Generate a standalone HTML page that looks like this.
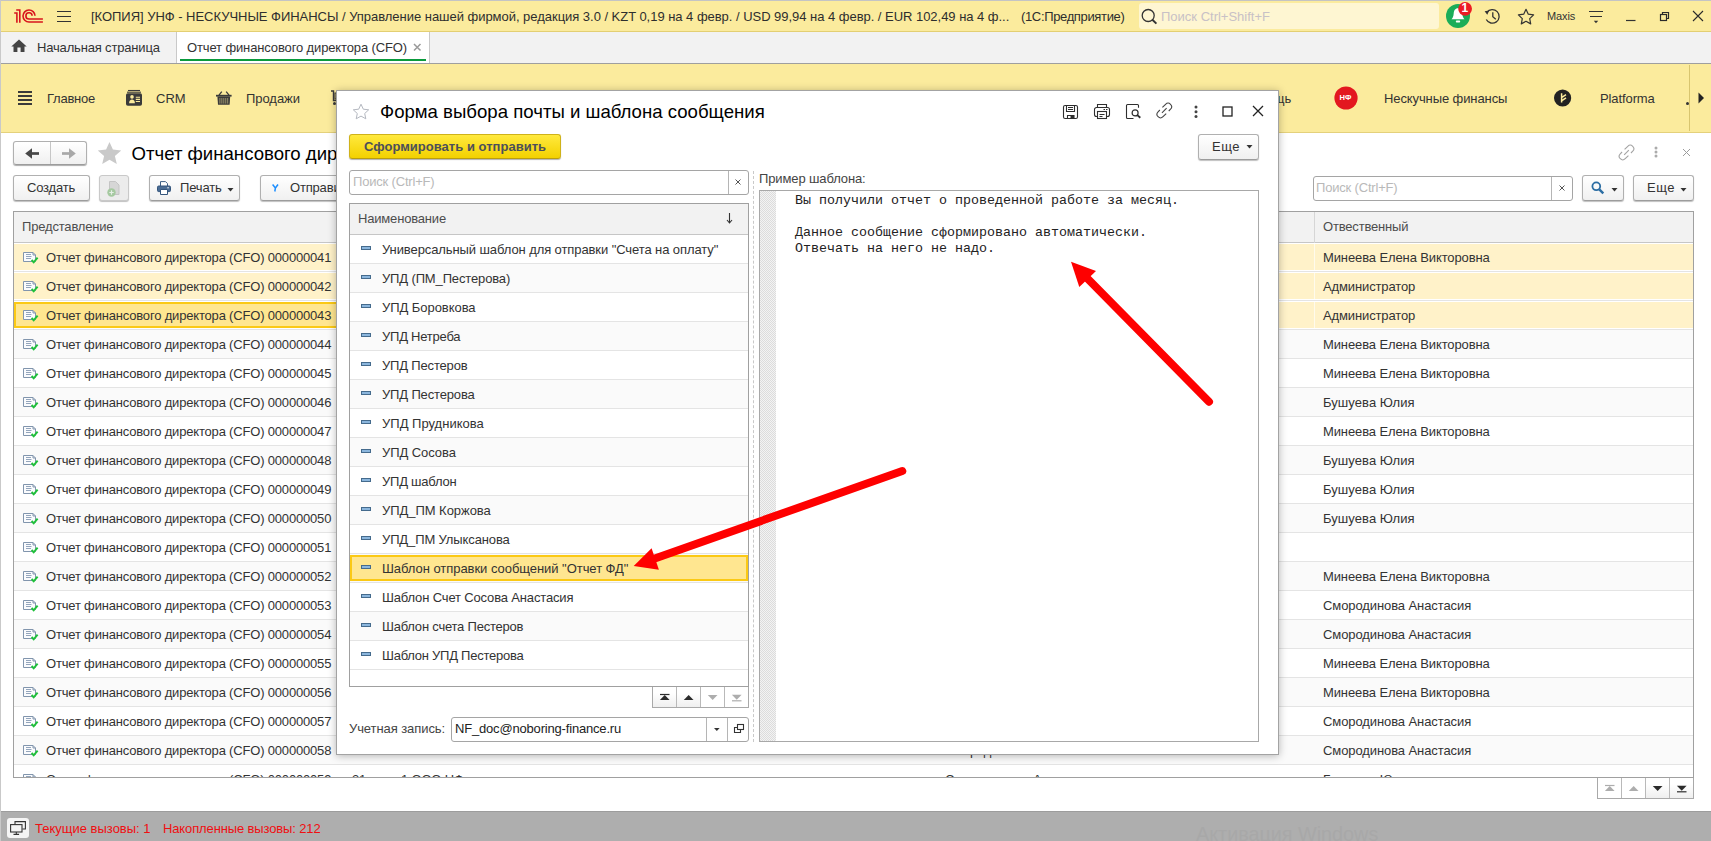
<!DOCTYPE html>
<html lang="ru">
<head>
<meta charset="utf-8">
<title>Отчет финансового директора (CFO)</title>
<style>
*{box-sizing:border-box;margin:0;padding:0}
html,body{width:1711px;height:841px;overflow:hidden;background:#fff}
body{position:relative;font-family:"Liberation Sans",sans-serif;font-size:13px;color:#333;letter-spacing:-0.18px}
.abs{position:absolute}
svg{position:absolute;overflow:visible}
.t{position:absolute;white-space:nowrap;line-height:16px}
#titlebar{left:0;top:0;width:1711px;height:32px;background:#fbeb9d;border-top:1px solid #c4c4c4;border-bottom:1px solid #e3cf73}
#tabbar{left:0;top:32px;width:1711px;height:32px;background:#f2f2f2;border-bottom:1px solid #9f9f9f}
#sections{left:0;top:64px;width:1711px;height:69px;background:#fbeb9d;border-bottom:1px solid #e4d17c}
#status{left:0;top:811px;width:1711px;height:30px;background:#aeaeae;border-top:1px solid #9c9c9c}
#leftedge{left:0;top:0;width:1px;height:841px;background:#c9c9c9}
.btn{position:absolute;height:26px;border:1px solid #b0b0b0;border-radius:3px;background:linear-gradient(#ffffff,#f0f0f0);box-shadow:0 1px 1px rgba(0,0,0,.25);border-bottom-color:#9c9c9c;color:#333;white-space:nowrap}
.btn .t{top:4px}
.inp{position:absolute;height:25px;border:1px solid #a5a5a5;border-radius:3px;background:#fff;white-space:nowrap}
.ph{color:#b9b9b9}
.grid{position:absolute;border:1px solid #a0a0a0;background:#fff;overflow:hidden}
.hdr{position:absolute;left:0;top:0;right:0;height:31px;background:#f2f2f2;border-bottom:1px solid #c6c6c6;color:#4d4d4d}
.hdr .t{top:7px}
.row{position:absolute;left:0;right:0;height:29px;border-bottom:1px solid #e4e4e4;background:#fff}
.row.alt{background:#fafafa}
.row.hl{background:#fff2c9;box-shadow:inset 0 1px 0 #fff,inset 0 -1px 0 #fff}
.row.sel::before{content:"";position:absolute;left:0;right:0;top:1px;height:26px;background:#ffe690;box-shadow:inset 0 0 0 2px #fbc915}
.row .t{top:7px}
.row .di{left:9px;top:8px}
.bar{position:absolute;left:11px;top:11px;width:10px;height:4px;background:#8bb6dd;border:1px solid #456b8d}
#dialog{left:336px;top:90px;width:943px;height:665px;background:#fff;border:1px solid #a3a3a3;box-shadow:0 1px 8px rgba(0,0,0,.28)}
.navb{position:absolute;height:22px;border:1px solid #a9a9a9;border-top:none;background:#fff}
.navb i{position:absolute;top:0;bottom:0;width:1px;background:#b9b9b9}
.selc{position:absolute;left:0;top:1px;width:330px;height:26px;background:#ffe690;box-shadow:inset 0 0 0 2px #fbc915}
.dl .row .t{letter-spacing:-0.08px}
.csep{position:absolute;left:1300px;top:1px;width:1px;height:26px;background:rgba(255,255,255,.65)}

</style>
</head>
<body>
<svg width="0" height="0" style="display:none">
<defs>
<g id="docicon">
<path d="M0.500 1.500h9.500l2.500 2.500v6.500h-12z" fill="#fafbfd" stroke="#8195ad" stroke-width="1"/>
<path d="M10 1.500v2.500h2.500" fill="none" stroke="#8195ad" stroke-width="1"/>
<path d="M3 3.500h5M3 5.500h5.500M3 7.500h5" stroke="#93a5bc" stroke-width="1" fill="none"/>
<path d="M8.600 9l2.100 2.300 3.900-4.600" fill="none" stroke="#1fc03a" stroke-width="2"/>
</g>
</defs>
</svg>
<div id="titlebar" class="abs"></div>
<!-- 1C logo -->
<svg style="left:0px;top:0px" width="50" height="32" viewBox="0 0 50 32" fill="none" stroke="#d8141c" stroke-width="1.600">
<path d="M14.200 13H16.900V22.800"/>
<path d="M16.200 10H19.800V22.800"/>
<path d="M35 15.800A6 6 0 1 0 29 22H42.900"/>
<path d="M32.100 15.800A3.100 3.100 0 1 0 29 19H42.900"/>
</svg>
<svg style="left:57px;top:10px" width="15" height="13" viewBox="0 0 15 13"><path d="M0 1.5h14M0 6.5h14M0 11.5h14" stroke="#333" stroke-width="1.1"/></svg>
<span class="t" style="left:91px;top:9px;letter-spacing:-0.03px;color:#2e2e2e">[КОПИЯ] УНФ - НЕСКУЧНЫЕ ФИНАНСЫ / Управление нашей фирмой, редакция 3.0 / KZT 0,19 на 4 февр. / USD 99,94 на 4 февр. / EUR 102,49 на 4 ф...</span>
<span class="t" style="left:1021px;top:9px;letter-spacing:-0.350px;color:#2e2e2e">(1С:Предприятие)</span>
<div class="abs" style="left:1139px;top:3px;width:300px;height:26px;background:#fef6d2;border-radius:3px"></div>
<svg style="left:1141px;top:8px" width="17" height="17" viewBox="0 0 17 17"><circle cx="7.2" cy="7.5" r="6" fill="none" stroke="#333" stroke-width="1.3"/><path d="M11.4 11.8L15.4 15.6" stroke="#333" stroke-width="2"/></svg>
<span class="t" style="left:1161px;top:9px;letter-spacing:0;color:#c8c1c6">Поиск Ctrl+Shift+F</span>
<!-- bell -->
<svg style="left:1446px;top:1px" width="28" height="28" viewBox="0 0 28 28">
<circle cx="12" cy="15" r="12" fill="#1bad59"/>
<path d="M12 7.2c-2.9 0-4.1 2.4-4.3 5.2-.2 3-1 4.600-2.200 5.800h13c-1.200-1.200-2-2.800-2.200-5.800-.2-2.800-1.400-5.200-4.300-5.200z" fill="#fff"/>
<rect x="9.8" y="19.600" width="4.400" height="1.900" rx=".9" fill="#fff"/>
<circle cx="19.100" cy="7.800" r="6.900" fill="#ec1c24"/>
</svg>
<span class="t" style="left:1461.600px;top:1px;font-weight:bold;font-size:12px;color:#fff;letter-spacing:0;line-height:15px">1</span>
<!-- history -->
<svg style="left:1484px;top:8px" width="17" height="17" viewBox="0 0 17 17">
<path d="M2.900 4.300A6.800 6.800 0 1 1 2.300 11.500" fill="none" stroke="#333" stroke-width="1.300"/>
<path d="M0.600 3.200L3.300 6.800 5.200 2.600z" fill="#333"/>
<path d="M8.800 4.300V8.800L11.800 11.200" fill="none" stroke="#333" stroke-width="1.300"/>
</svg>
<!-- star -->
<svg style="left:1517px;top:8px" width="18" height="17" viewBox="0 0 18 17"><path d="M9 1.300l2.300 4.900 5.300.7-3.900 3.700 1 5.300L9 13.300l-4.700 2.600 1-5.300L1.400 6.900l5.300-.7z" fill="none" stroke="#333" stroke-width="1.200" stroke-linejoin="round"/></svg>
<span class="t" style="left:1547px;top:8px;font-size:11px;letter-spacing:-0.1px;color:#333">Maxis</span>
<svg style="left:1589px;top:10px" width="15" height="14" viewBox="0 0 15 14"><path d="M0 1.500h14M1 6.500h12" stroke="#333" stroke-width="1.100"/><path d="M4.800 10.800h4.400l-2.200 2.400z" fill="#333"/></svg>
<svg style="left:1626px;top:19px" width="10" height="3" viewBox="0 0 10 3"><path d="M0 1.500h9.500" stroke="#333" stroke-width="1.200"/></svg>
<svg style="left:1659px;top:11px" width="11" height="11" viewBox="0 0 11 11"><path d="M3.500 3V1.500H9.500V7.500H8" fill="none" stroke="#2a2a2a" stroke-width="1.200"/><rect x="1.500" y="3.500" width="6" height="6" fill="none" stroke="#2a2a2a" stroke-width="1.200"/></svg>
<svg style="left:1692px;top:10px" width="12" height="12" viewBox="0 0 12 12"><path d="M1 1l10 10M11 1L1 11" stroke="#2a2a2a" stroke-width="1.100"/></svg>

<div id="tabbar" class="abs"></div>
<svg style="left:11px;top:39px" width="16" height="14" viewBox="0 0 16 14"><path d="M8 0.600L0.300 7.600h2.200V13h3.900V8.600h3.200V13h3.900V7.600h2.200z" fill="#444"/></svg>
<span class="t" style="left:37px;top:40px;letter-spacing:-0.17px">Начальная страница</span>
<div class="abs" style="left:176px;top:32px;width:254px;height:31px;background:#fff;border-left:1px solid #c9c9c9;border-right:1px solid #c9c9c9"></div>
<div class="abs" style="left:180px;top:59px;width:246px;height:2px;background:#0a9a3c"></div>
<span class="t" style="left:187px;top:40px;letter-spacing:-0.13px">Отчет финансового директора (CFO)</span>
<svg style="left:413px;top:43px" width="9" height="9" viewBox="0 0 9 9"><path d="M1 1l6.500 6.500M7.500 1L1 7.500" stroke="#9a9a9a" stroke-width="1.500"/></svg>

<div id="sections" class="abs"></div>
<svg style="left:18px;top:91px" width="15" height="15" viewBox="0 0 15 15"><path d="M0 1h14M0 5h14M0 9h14M0 13h14" stroke="#3a3a3a" stroke-width="2"/></svg>
<span class="t" style="left:47px;top:91px;letter-spacing:-0.250px">Главное</span>
<!-- CRM icon -->
<svg style="left:126px;top:90px" width="17" height="17" viewBox="0 0 17 17">
<path d="M2 0.500h12" stroke="#3a3a3a" stroke-width="1.100"/>
<path d="M1 2.200h14" stroke="#3a3a3a" stroke-width="1.100"/>
<rect x="0" y="3.300" width="16" height="12.500" rx="1.800" fill="#3a3a3a"/>
<circle cx="6" cy="6.900" r="1.800" fill="#fbeb9d"/>
<path d="M3.100 13.200c0-2.400 1.300-3.600 2.900-3.600s2.900 1.200 2.900 3.600z" fill="#fbeb9d"/>
<path d="M9.800 7.300h4.200M9.800 9.400h4.200M9.800 11.500h4.200" stroke="#fbeb9d" stroke-width="1.100"/>
</svg>
<span class="t" style="left:156px;top:91px;letter-spacing:0">CRM</span>
<!-- basket -->
<svg style="left:216px;top:91px" width="16" height="14" viewBox="0 0 16 14">
<path d="M3 4.200L5.800 0.600M13 4.200L10.200 0.600" stroke="#3a3a3a" stroke-width="1.300" fill="none"/>
<path d="M0 3.800h15.600v1.800H0z" fill="#3a3a3a"/>
<path d="M1.400 5.600h12.800l-0.600 8.100H2z" fill="#3a3a3a"/>
<path d="M3.900 7v5.600M5.850 7v5.600M7.800 7v5.600M9.750 7v5.600M11.700 7v5.600" stroke="#fbeb9d" stroke-width=".5"/>
</svg>
<span class="t" style="left:246px;top:91px;letter-spacing:-0.05px">Продажи</span>
<svg style="left:331px;top:90px" width="12" height="16" viewBox="0 0 12 16"><path d="M0 1h2.500v9.500h8" fill="none" stroke="#3a3a3a" stroke-width="1.400"/><path d="M4 3h7v6H4z" fill="none" stroke="#3a3a3a" stroke-width="1.200"/><circle cx="3.500" cy="13.500" r="1.500" fill="#3a3a3a"/></svg>
<span class="t" style="left:1241px;top:91px;letter-spacing:0">Помощь</span>
<svg style="left:1334px;top:86px" width="24" height="24" viewBox="0 0 24 24"><circle cx="12" cy="12" r="11.600" fill="#e3181f"/></svg>
<span class="t" style="left:1339.500px;top:92px;font-size:7.500px;font-weight:bold;color:#fff;letter-spacing:0;line-height:12px">НФ</span>
<span class="t" style="left:1384px;top:91px;letter-spacing:-0.1px">Нескучные финансы</span>
<svg style="left:1554px;top:89px" width="18" height="18" viewBox="0 0 18 18"><circle cx="8.600" cy="9" r="8.600" fill="#222"/><path d="M7.600 4.200V13.400M7.900 8.400L12 5.600M7.900 11.600L12 8.800" stroke="#fbeb9d" stroke-width="1.500" fill="none"/></svg>
<span class="t" style="left:1600px;top:91px;letter-spacing:-0.1px">Platforma</span>
<div class="abs" style="left:1686px;top:102px;width:3px;height:3px;border-radius:2px;background:#333"></div>
<div class="abs" style="left:1689px;top:65px;width:1px;height:66px;background:#d8c56f"></div>
<svg style="left:1698px;top:92px" width="7" height="12" viewBox="0 0 7 12"><path d="M0.500 0.500L6 6 0.500 11.500z" fill="#222"/></svg>

<!-- main form -->
<div class="btn" style="left:13px;top:141px;width:74px;height:24px;box-shadow:0 1px 1px rgba(0,0,0,.33)"><div class="abs" style="left:36px;top:0;width:1px;height:22px;background:#c6c6c6"></div>
<svg style="left:11px;top:6px" width="15" height="11" viewBox="0 0 15 11"><path d="M14 5.500H4" stroke="#474747" stroke-width="2.700"/><path d="M0.200 5.500L7 0.200V10.800z" fill="#474747"/></svg>
<svg style="left:47px;top:6px" width="15" height="11" viewBox="0 0 15 11"><path d="M1 5.500H11" stroke="#a8a8a8" stroke-width="2.700"/><path d="M14.800 5.500L8 0.200V10.800z" fill="#a8a8a8"/></svg>
</div>
<svg style="left:97px;top:141px" width="25" height="24" viewBox="0 0 25 24"><path d="M12.500 1l3.400 7.600 8.300.8-6.300 5.500 1.900 8.100-7.300-4.300-7.300 4.300 1.900-8.100L.8 9.400l8.300-.8z" fill="#c9c9c9"/></svg>
<span class="t" style="left:131.500px;top:142.500px;font-size:18.600px;line-height:22px;color:#000;letter-spacing:0">Отчет финансового директора (CFO)</span>
<div class="btn" style="left:13px;top:175px;width:77px"><span class="t" style="left:13px">Создать</span></div>
<div class="btn" style="left:99px;top:175px;width:30px;background:#ececec;border-color:#c9c9c9">
<svg style="left:7px;top:5px" width="14" height="16" viewBox="0 0 14 16"><path d="M2.500 0.500h6l3.500 3.500v9.500h-9.500z" fill="#d6d6d6" stroke="#c4c4c4"/><circle cx="4.500" cy="11.500" r="4.200" fill="#a5c9a0"/><path d="M4.500 9.300v4.400M2.300 11.500h4.400" stroke="#e6efe6" stroke-width="1.200"/></svg>
</div>
<div class="btn" style="left:149px;top:175px;width:91px">
<svg style="left:7px;top:5px" width="14" height="14" viewBox="0 0 14 14"><path d="M3.500 5V0.600h5l2 2V5" fill="#fff" stroke="#3d5f86" stroke-width="1"/><rect x="0.500" y="5" width="13" height="5.600" rx="1.200" fill="#4a6c94" stroke="#34557c" stroke-width="1"/><path d="M3.500 8.500h7v5h-7z" fill="#fff" stroke="#34557c" stroke-width="1"/><path d="M10.300 6.800h1.500" stroke="#fff" stroke-width="1"/></svg>
<span class="t" style="left:30px">Печать</span>
<svg style="left:77px;top:12px" width="8" height="4" viewBox="0 0 8 4"><path d="M0.500 0h6l-3 3.600z" fill="#333"/></svg>
</div>
<div class="btn" style="left:260px;top:175px;width:110px">
<svg style="left:11px;top:8px" width="7" height="8" viewBox="0 0 7 8"><path d="M0.600 0.500L3.400 4 6 0.500M3.400 4L2.800 7.500" fill="none" stroke="#1e8fff" stroke-width="1.500"/></svg>
<span class="t" style="left:29px">Отправить</span>
</div>
<!-- right header icons -->
<svg style="left:0;top:0" width="1" height="1" viewBox="0 0 1 1" fill="none" stroke="#a3a3a3" stroke-width="1.100"><g transform="translate(1626.5 152.5) rotate(-45)"><path d="M0.800 -3.500H5.300A3.500 3.500 0 0 1 5.300 3.500H2.800"/><path d="M-0.800 3.500H-5.300A3.500 3.500 0 0 1 -5.300 -3.500H-2.800"/><path d="M-3.300 0H3.300"/></g></svg>
<svg style="left:1654px;top:146px" width="4" height="14" viewBox="0 0 4 14"><circle cx="2" cy="2" r="1.500" fill="#ababab"/><circle cx="2" cy="6" r="1.500" fill="#ababab"/><circle cx="2" cy="10" r="1.500" fill="#ababab"/></svg>
<svg style="left:1683px;top:149px" width="8" height="8" viewBox="0 0 8 8"><path d="M0 0l7 7M7 0L0 7" stroke="#9c9c9c" stroke-width="1"/></svg>
<div class="inp" style="left:1313px;top:176px;width:260px"><span class="t ph" style="left:2px;top:3px">Поиск (Ctrl+F)</span><div class="abs" style="left:237px;top:0;width:1px;height:23px;background:#b5b5b5"></div>
<svg style="left:245px;top:8px" width="6" height="6" viewBox="0 0 6 6"><path d="M0.500 0.500l5 5M5.500 0.500L0.500 5.500" stroke="#555" stroke-width="1"/></svg></div>
<div class="btn" style="left:1582px;top:175px;width:42px">
<svg style="left:8px;top:5px" width="14" height="14" viewBox="0 0 14 14"><circle cx="5.300" cy="5.300" r="3.900" fill="none" stroke="#2b6da3" stroke-width="1.800"/><path d="M8.300 8.300L12.300 12.300" stroke="#2b6da3" stroke-width="2.400"/></svg>
<svg style="left:28px;top:12px" width="8" height="4" viewBox="0 0 8 4"><path d="M0.500 0h6l-3 3.600z" fill="#333"/></svg>
</div>
<div class="btn" style="left:1633px;top:175px;width:61px"><span class="t" style="left:13px;letter-spacing:0.500px">Еще</span><svg style="left:46px;top:12px" width="8" height="4" viewBox="0 0 8 4"><path d="M0.500 0h6l-3 3.600z" fill="#333"/></svg></div>

<div class="grid" style="left:13px;top:211px;width:1681px;height:567px">
<div class="hdr"><span class="t" style="left:8px">Представление</span><div class="abs" style="left:1300px;top:0;width:1px;height:31px;background:#d6d6d6"></div><span class="t" style="left:1309px">Отвественный</span></div>
<div class="row hl" style="top:31px"><div class="csep"></div><svg class="di" width="16" height="13" viewBox="0 0 16 13"><use href="#docicon"/></svg><span class="t" style="left:32px">Отчет финансового директора (CFO) 000000041</span><span class="t" style="left:1309px;letter-spacing:-0.114px">Минеева Елена Викторовна</span></div>
<div class="row alt hl" style="top:60px"><div class="csep"></div><svg class="di" width="16" height="13" viewBox="0 0 16 13"><use href="#docicon"/></svg><span class="t" style="left:32px">Отчет финансового директора (CFO) 000000042</span><span class="t" style="left:1309px;letter-spacing:-0.125px">Администратор</span></div>
<div class="row hl" style="top:89px"><div class="csep"></div><div class="selc"></div><svg class="di" width="16" height="13" viewBox="0 0 16 13"><use href="#docicon"/></svg><span class="t" style="left:32px">Отчет финансового директора (CFO) 000000043</span><span class="t" style="left:1309px;letter-spacing:-0.125px">Администратор</span></div>
<div class="row alt" style="top:118px"><svg class="di" width="16" height="13" viewBox="0 0 16 13"><use href="#docicon"/></svg><span class="t" style="left:32px">Отчет финансового директора (CFO) 000000044</span><span class="t" style="left:1309px;letter-spacing:-0.114px">Минеева Елена Викторовна</span></div>
<div class="row" style="top:147px"><svg class="di" width="16" height="13" viewBox="0 0 16 13"><use href="#docicon"/></svg><span class="t" style="left:32px">Отчет финансового директора (CFO) 000000045</span><span class="t" style="left:1309px;letter-spacing:-0.114px">Минеева Елена Викторовна</span></div>
<div class="row alt" style="top:176px"><svg class="di" width="16" height="13" viewBox="0 0 16 13"><use href="#docicon"/></svg><span class="t" style="left:32px">Отчет финансового директора (CFO) 000000046</span><span class="t" style="left:1309px;letter-spacing:0.064px">Бушуева Юлия</span></div>
<div class="row" style="top:205px"><svg class="di" width="16" height="13" viewBox="0 0 16 13"><use href="#docicon"/></svg><span class="t" style="left:32px">Отчет финансового директора (CFO) 000000047</span><span class="t" style="left:1309px;letter-spacing:-0.114px">Минеева Елена Викторовна</span></div>
<div class="row alt" style="top:234px"><svg class="di" width="16" height="13" viewBox="0 0 16 13"><use href="#docicon"/></svg><span class="t" style="left:32px">Отчет финансового директора (CFO) 000000048</span><span class="t" style="left:1309px;letter-spacing:0.064px">Бушуева Юлия</span></div>
<div class="row" style="top:263px"><svg class="di" width="16" height="13" viewBox="0 0 16 13"><use href="#docicon"/></svg><span class="t" style="left:32px">Отчет финансового директора (CFO) 000000049</span><span class="t" style="left:1309px;letter-spacing:0.064px">Бушуева Юлия</span></div>
<div class="row alt" style="top:292px"><svg class="di" width="16" height="13" viewBox="0 0 16 13"><use href="#docicon"/></svg><span class="t" style="left:32px">Отчет финансового директора (CFO) 000000050</span><span class="t" style="left:1309px;letter-spacing:0.064px">Бушуева Юлия</span></div>
<div class="row" style="top:321px"><svg class="di" width="16" height="13" viewBox="0 0 16 13"><use href="#docicon"/></svg><span class="t" style="left:32px">Отчет финансового директора (CFO) 000000051</span><span class="t" style="left:1309px"></span></div>
<div class="row alt" style="top:350px"><svg class="di" width="16" height="13" viewBox="0 0 16 13"><use href="#docicon"/></svg><span class="t" style="left:32px">Отчет финансового директора (CFO) 000000052</span><span class="t" style="left:1309px;letter-spacing:-0.114px">Минеева Елена Викторовна</span></div>
<div class="row" style="top:379px"><svg class="di" width="16" height="13" viewBox="0 0 16 13"><use href="#docicon"/></svg><span class="t" style="left:32px">Отчет финансового директора (CFO) 000000053</span><span class="t" style="left:1309px;letter-spacing:-0.091px">Смородинова Анастасия</span></div>
<div class="row alt" style="top:408px"><svg class="di" width="16" height="13" viewBox="0 0 16 13"><use href="#docicon"/></svg><span class="t" style="left:32px">Отчет финансового директора (CFO) 000000054</span><span class="t" style="left:1309px;letter-spacing:-0.091px">Смородинова Анастасия</span></div>
<div class="row" style="top:437px"><svg class="di" width="16" height="13" viewBox="0 0 16 13"><use href="#docicon"/></svg><span class="t" style="left:32px">Отчет финансового директора (CFO) 000000055</span><span class="t" style="left:1309px;letter-spacing:-0.114px">Минеева Елена Викторовна</span></div>
<div class="row alt" style="top:466px"><svg class="di" width="16" height="13" viewBox="0 0 16 13"><use href="#docicon"/></svg><span class="t" style="left:32px">Отчет финансового директора (CFO) 000000056</span><span class="t" style="left:1309px;letter-spacing:-0.114px">Минеева Елена Викторовна</span></div>
<div class="row" style="top:495px"><svg class="di" width="16" height="13" viewBox="0 0 16 13"><use href="#docicon"/></svg><span class="t" style="left:32px">Отчет финансового директора (CFO) 000000057</span><span class="t" style="left:1309px;letter-spacing:-0.091px">Смородинова Анастасия</span></div>
<div class="row alt" style="top:524px"><svg class="di" width="16" height="13" viewBox="0 0 16 13"><use href="#docicon"/></svg><span class="t" style="left:32px">Отчет финансового директора (CFO) 000000058</span><span class="t" style="left:338px">31</span><span class="t" style="left:387px">1 ООО НФ</span><span class="t" style="left:931px">Смородинова Анастасия</span><span class="t" style="left:1309px;letter-spacing:-0.091px">Смородинова Анастасия</span></div>
<div class="row" style="top:553px"><svg class="di" width="16" height="13" viewBox="0 0 16 13"><use href="#docicon"/></svg><span class="t" style="left:32px">Отчет финансового директора (CFO) 000000059</span><span class="t" style="left:338px">31</span><span class="t" style="left:387px">1 ООО НФ</span><span class="t" style="left:931px">Смородинова</span><span class="t" style="left:1019px">Анастасия</span><span class="t" style="left:1309px;letter-spacing:0.064px">Бушуева Юлия</span></div>
</div>
<div class="navb" style="left:1597px;top:778px;width:97px;height:21px"><div class="abs" style="left:48px;top:0;width:47px;height:20px;background:linear-gradient(#fff 30%,#efefef)"></div><i style="left:23px"></i><i style="left:47px"></i><i style="left:71px"></i>
<svg style="left:0;top:0" width="95" height="20" viewBox="0 0 95 20">
<path d="M7 7.500h9.500" stroke="#adadad" stroke-width="1.200"/><path d="M11.750 8L16.600 13H6.900z" fill="#adadad"/>
<path d="M35.650 8L40.500 13H30.800z" fill="#adadad"/>
<path d="M59.650 13L64.500 8H54.800z" fill="#2b2b2b"/>
<path d="M83.750 12.700L88.600 7.800H78.900z" fill="#2b2b2b"/><path d="M79 13.800h9.500" stroke="#2b2b2b" stroke-width="1.200"/>
</svg>
</div>

<div id="status" class="abs"></div>
<div class="abs" style="left:7px;top:818px;width:22px;height:20px;background:#f5f5f5;border-radius:3px"></div>
<svg style="left:10px;top:821px" width="16" height="14" viewBox="0 0 16 14" fill="none" stroke="#333" stroke-width="1.100"><path d="M5 3.500V0.600h10.400v7.400h-3"/><rect x="0.600" y="3.600" width="11.400" height="7.400" fill="#f4f4f4"/><path d="M6.300 11v2M3.500 13.400h5.600"/></svg>
<span class="t" style="left:35px;top:821px;color:#f00f12;letter-spacing:0">Текущие вызовы: 1</span>
<span class="t" style="left:163px;top:821px;color:#f00f12;letter-spacing:-0.130px">Накопленные вызовы: 212</span>
<span class="t" style="left:1196px;top:822px;font-size:19.800px;line-height:24px;color:#a8a8a8;letter-spacing:0">Активация Windows</span>

<!-- dialog -->
<div id="dialog" class="abs"></div>
<svg style="left:352px;top:103px" width="18" height="17" viewBox="0 0 18 17"><path d="M9 1.200l2.300 5 5.400.6-4 3.700 1.100 5.300L9 13.100l-4.800 2.700 1.100-5.300-4-3.700 5.400-.6z" fill="#fff" stroke="#b4b8c0" stroke-width="1" stroke-linejoin="round"/></svg>
<span class="t" style="left:380px;top:101px;font-size:18.600px;line-height:22px;color:#000;letter-spacing:0">Форма выбора почты и шаблона сообщения</span>
<!-- dialog header icons -->
<svg style="left:1062px;top:104px" width="17" height="16" viewBox="0 0 17 16" fill="none" stroke="#2e2e2e" stroke-width="1.100"><rect x="1.500" y="1.500" width="14" height="13" rx="1.600"/><path d="M4.500 1.500v6h8v-6"/><path d="M6 3.500h5M6 5.500h5" stroke-width="1"/><path d="M5.500 14.500v-3h6.500v3"/><rect x="8.500" y="11.500" width="3.500" height="3" fill="#2e2e2e" stroke="none"/></svg>
<svg style="left:1093px;top:103px" width="18" height="17" viewBox="0 0 18 17" fill="none" stroke="#2e2e2e" stroke-width="1.100"><path d="M4.500 4.500V1.500H13.500V4.500"/><path d="M4.500 13.500H3.500a2 2 0 0 1-2-2V6.500a2 2 0 0 1 2-2H14.500a2 2 0 0 1 2 2V11.500a2 2 0 0 1-2 2H13.500"/><rect x="4.500" y="8.500" width="9" height="7"/><path d="M6.500 11.500h5M6.500 13.500h3M10.500 6.500h1.500M13 6.500h1.500" stroke-width="1"/></svg>
<svg style="left:1125px;top:103px" width="18" height="17" viewBox="0 0 18 17" fill="none" stroke="#2e2e2e"><path d="M8.500 15.500H2.500a1 1 0 0 1-1-1V2.500a1 1 0 0 1 1-1H12.500a1 1 0 0 1 1 1V4.800" stroke-width="1.100"/><circle cx="10.100" cy="9.900" r="3" stroke-width="1.200"/><path d="M12.300 12.100l3 2.600" stroke-width="1.900"/></svg>
<svg style="left:0;top:0" width="1" height="1" viewBox="0 0 1 1" fill="none" stroke="#454545" stroke-width="1.100"><g transform="translate(1164.3 110.5) rotate(-45)"><path d="M0.800 -3.500H5.300A3.500 3.500 0 0 1 5.300 3.500H2.800"/><path d="M-0.800 3.500H-5.300A3.500 3.500 0 0 1 -5.300 -3.500H-2.800"/><path d="M-3.300 0H3.300"/></g></svg>
<svg style="left:1194px;top:105px" width="4" height="14" viewBox="0 0 4 14"><circle cx="2" cy="2" r="1.500" fill="#444"/><circle cx="2" cy="6.700" r="1.500" fill="#444"/><circle cx="2" cy="11.400" r="1.500" fill="#444"/></svg>
<svg style="left:1222px;top:106px" width="11" height="11" viewBox="0 0 11 11"><rect x="1" y="1" width="9" height="9" fill="none" stroke="#222" stroke-width="1.300"/></svg>
<svg style="left:1252px;top:105px" width="12" height="12" viewBox="0 0 12 12"><path d="M1 1l10 10M11 1L1 11" stroke="#222" stroke-width="1.300"/></svg>

<div class="btn" style="left:349px;top:134px;width:212px;height:25px;background:linear-gradient(#ffe93e,#f3d100);border-color:#cfb21a;border-bottom-color:#b99d10;box-shadow:0 1px 1px rgba(0,0,0,.3)"><span class="t" style="left:14px;top:4px;font-weight:bold;color:#4c4f5a;letter-spacing:0.02px">Сформировать и отправить</span></div>
<div class="btn" style="left:1198px;top:134px;width:61px"><span class="t" style="left:13px;letter-spacing:0.500px">Еще</span><svg style="left:47px;top:10px" width="8" height="4" viewBox="0 0 8 4"><path d="M0.500 0h6l-3 3.600z" fill="#333"/></svg></div>

<div class="inp" style="left:349px;top:170px;width:400px"><span class="t ph" style="left:3px;top:3px">Поиск (Ctrl+F)</span><div class="abs" style="left:378px;top:0;width:1px;height:23px;background:#b5b5b5"></div>
<svg style="left:385px;top:8px" width="6" height="6" viewBox="0 0 6 6"><path d="M0.500 0.500l5 5M5.500 0.500L0.500 5.500" stroke="#555" stroke-width="1"/></svg></div>

<div class="grid dl" style="left:349px;top:203px;width:400px;height:484px">
<div class="hdr"><span class="t" style="left:8px">Наименование</span>
<svg style="left:376px;top:9px" width="7" height="11" viewBox="0 0 7 11"><path d="M3.500 0v9.500M1 7l2.500 3L6 7" fill="none" stroke="#333" stroke-width="1.100"/></svg></div>
<div class="row" style="top:31px"><i class="bar"></i><span class="t" style="left:32px;letter-spacing:-0.092px">Универсальный шаблон для отправки &quot;Счета на оплату&quot;</span></div>
<div class="row alt" style="top:60px"><i class="bar"></i><span class="t" style="left:32px;letter-spacing:-0.139px">УПД (ПМ_Пестерова)</span></div>
<div class="row" style="top:89px"><i class="bar"></i><span class="t" style="left:32px;letter-spacing:-0.050px">УПД Боровкова</span></div>
<div class="row alt" style="top:118px"><i class="bar"></i><span class="t" style="left:32px;letter-spacing:-0.226px">УПД Нетреба</span></div>
<div class="row" style="top:147px"><i class="bar"></i><span class="t" style="left:32px;letter-spacing:-0.173px">УПД Пестеров</span></div>
<div class="row alt" style="top:176px"><i class="bar"></i><span class="t" style="left:32px;letter-spacing:-0.149px">УПД Пестерова</span></div>
<div class="row" style="top:205px"><i class="bar"></i><span class="t" style="left:32px;letter-spacing:0.015px">УПД Прудникова</span></div>
<div class="row alt" style="top:234px"><i class="bar"></i><span class="t" style="left:32px;letter-spacing:-0.068px">УПД Сосова</span></div>
<div class="row" style="top:263px"><i class="bar"></i><span class="t" style="left:32px;letter-spacing:-0.232px">УПД шаблон</span></div>
<div class="row alt" style="top:292px"><i class="bar"></i><span class="t" style="left:32px;letter-spacing:-0.044px">УПД_ПМ Коржова</span></div>
<div class="row" style="top:321px"><i class="bar"></i><span class="t" style="left:32px;letter-spacing:-0.119px">УПД_ПМ Улыксанова</span></div>
<div class="row alt sel" style="top:350px"><i class="bar"></i><span class="t" style="left:32px;letter-spacing:-0.045px">Шаблон отправки сообщений &quot;Отчет ФД&quot;</span></div>
<div class="row" style="top:379px"><i class="bar"></i><span class="t" style="left:32px;letter-spacing:-0.154px">Шаблон Счет Сосова Анастасия</span></div>
<div class="row alt" style="top:408px"><i class="bar"></i><span class="t" style="left:32px;letter-spacing:-0.216px">Шаблон счета Пестеров</span></div>
<div class="row" style="top:437px"><i class="bar"></i><span class="t" style="left:32px;letter-spacing:-0.244px">Шаблон УПД Пестерова</span></div>
</div>
<div class="navb" style="left:652px;top:687px;width:97px;height:21px"><div class="abs" style="left:0;top:0;width:47px;height:20px;background:linear-gradient(#fff 30%,#efefef)"></div><i style="left:23px"></i><i style="left:47px"></i><i style="left:71px"></i>
<svg style="left:0;top:0" width="95" height="20" viewBox="0 0 95 20">
<path d="M7 7.500h9.500" stroke="#2b2b2b" stroke-width="1.200"/><path d="M11.750 8L16.600 13H6.900z" fill="#2b2b2b"/>
<path d="M35.650 8L40.500 13H30.800z" fill="#2b2b2b"/>
<path d="M59.650 13L64.500 8H54.800z" fill="#adadad"/>
<path d="M83.750 12.700L88.600 7.800H78.900z" fill="#adadad"/><path d="M79 13.800h9.500" stroke="#adadad" stroke-width="1.200"/>
</svg>
</div>
<span class="t" style="left:349px;top:721px;color:#444;letter-spacing:-0.080px">Учетная запись:</span>
<div class="inp" style="left:451px;top:717px;width:298px"><span class="t" style="left:3px;top:3px;color:#222">NF_doc@noboring-finance.ru</span>
<div class="abs" style="left:254px;top:0;width:1px;height:23px;background:#b5b5b5"></div><div class="abs" style="left:275px;top:0;width:1px;height:23px;background:#b5b5b5"></div>
<svg style="left:262px;top:9.500px" width="6" height="3" viewBox="0 0 6 3"><path d="M0 0h5.600l-2.800 3z" fill="#333"/></svg>
<svg style="left:282px;top:6px" width="10" height="10" viewBox="0 0 10 10" fill="none" stroke="#333" stroke-width="1.100"><rect x="3.500" y="0.500" width="6" height="5"/><path d="M3.500 3.500H0.500V8.500H6.500V5.500"/></svg>
</div>
<div class="abs" style="left:753px;top:171px;width:0;height:571px;border-left:1px dashed #c9c9c9"></div>
<span class="t" style="left:759px;top:171px;color:#444;letter-spacing:-0.120px">Пример шаблона:</span>
<div class="abs" style="left:759px;top:190px;width:500px;height:552px;border:1px solid #a8a8a8;background:#fff"></div>
<div class="abs" style="left:760px;top:191px;width:16px;height:550px;background:#e9e9e9;background-image:repeating-conic-gradient(#dcdcdc 0 25%,#f3f3f3 0 50%);background-size:2px 2px"></div>
<pre class="t" style="white-space:pre;left:795px;top:192.500px;font-family:'Liberation Mono',monospace;font-size:13.330px;line-height:16px;color:#222;letter-spacing:0">Вы получили отчет о проведенной работе за месяц.

Данное сообщение сформировано автоматически.
Отвечать на него не надо.</pre>

<!-- arrows -->
<svg style="left:0;top:0" width="1711" height="841" viewBox="0 0 1711 841">
<path d="M1209 401.700L1085 276" stroke="#fe0000" stroke-width="8" stroke-linecap="round" fill="none"/>
<path d="M1071 261.800L1096 271 1079.300 287z" fill="#fe0000"/>
<path d="M902.300 471L652 559.500" stroke="#fe0000" stroke-width="8" stroke-linecap="round" fill="none"/>
<path d="M633.700 566L651.600 548.200 658.900 569.800z" fill="#fe0000"/>
</svg>
<div id="leftedge" class="abs"></div>

</body>
</html>
